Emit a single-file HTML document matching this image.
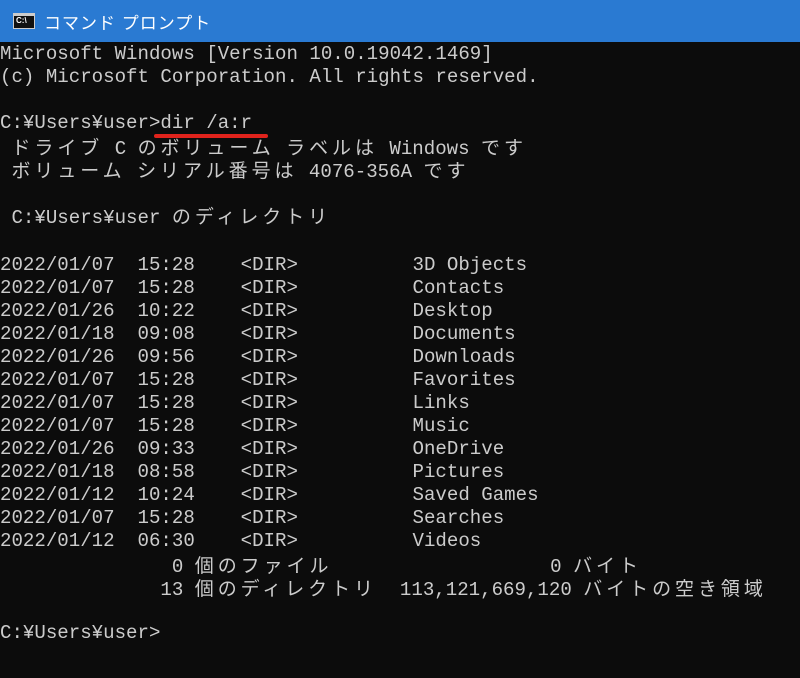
<!DOCTYPE html>
<html><head><meta charset="utf-8"><style>
body{margin:0;width:800px;height:678px;background:#0c0c0c;overflow:hidden;position:relative;font-family:"Liberation Mono","Noto Sans CJK JP",monospace;}
#t{position:absolute;left:0;top:0;width:800px;height:42px;background:#2a7ad2;}
#t .ic{position:absolute;left:13px;top:13px;width:22px;height:16px;background:#111;border:1px solid #ccc;border-top:3px solid #ccc;box-sizing:border-box;color:#fff;font:bold 8px "Liberation Sans",sans-serif;line-height:10px;padding-left:2px}
#t .tt{position:absolute;left:44px;top:9px;color:#fff;font:17px "Liberation Sans","Noto Sans CJK JP",sans-serif;letter-spacing:1px}
.l{position:absolute;left:0;white-space:pre;color:#cccccc;font-size:19.1px;line-height:23px;height:23px}
.j{font-family:"Noto Sans CJK JP",sans-serif;font-size:19px;letter-spacing:3.94px}
#u{position:absolute;left:154px;top:134px;width:114px;height:4px;background:#e0231c;border-radius:2px}
#c{position:absolute;top:2px;left:0}
</style></head><body>
<div id="t"><div class="ic">C:\</div><div class="tt">コマンド プロンプト</div></div>
<div id="c">
<div class="l" style="top:41px">Microsoft Windows [Version 10.0.19042.1469]</div>
<div class="l" style="top:64px">(c) Microsoft Corporation. All rights reserved.</div>
<div class="l" style="top:110px">C:¥Users¥user&gt;dir /a:r</div>
<div class="l" style="top:133px"> <span class="j">ドライブ</span> C <span class="j">のボリューム</span> <span class="j">ラベルは</span> Windows <span class="j">です</span></div>
<div class="l" style="top:156px"> <span class="j">ボリューム</span> <span class="j">シリアル番号は</span> 4076-356A <span class="j">です</span></div>
<div class="l" style="top:202px"> C:¥Users¥user <span class="j">のディレクトリ</span></div>
<div class="l" style="top:252px">2022/01/07  15:28    &lt;DIR&gt;          3D Objects</div>
<div class="l" style="top:275px">2022/01/07  15:28    &lt;DIR&gt;          Contacts</div>
<div class="l" style="top:298px">2022/01/26  10:22    &lt;DIR&gt;          Desktop</div>
<div class="l" style="top:321px">2022/01/18  09:08    &lt;DIR&gt;          Documents</div>
<div class="l" style="top:344px">2022/01/26  09:56    &lt;DIR&gt;          Downloads</div>
<div class="l" style="top:367px">2022/01/07  15:28    &lt;DIR&gt;          Favorites</div>
<div class="l" style="top:390px">2022/01/07  15:28    &lt;DIR&gt;          Links</div>
<div class="l" style="top:413px">2022/01/07  15:28    &lt;DIR&gt;          Music</div>
<div class="l" style="top:436px">2022/01/26  09:33    &lt;DIR&gt;          OneDrive</div>
<div class="l" style="top:459px">2022/01/18  08:58    &lt;DIR&gt;          Pictures</div>
<div class="l" style="top:482px">2022/01/12  10:24    &lt;DIR&gt;          Saved Games</div>
<div class="l" style="top:505px">2022/01/07  15:28    &lt;DIR&gt;          Searches</div>
<div class="l" style="top:528px">2022/01/12  06:30    &lt;DIR&gt;          Videos</div>
<div class="l" style="top:551px">               0 <span class="j">個のファイル</span>                   0 <span class="j">バイト</span></div>
<div class="l" style="top:574px">              13 <span class="j">個のディレクトリ</span>  113,121,669,120 <span class="j">バイトの空き領域</span></div>
<div class="l" style="top:620px">C:¥Users¥user&gt;</div>
</div>
<div id="u"></div>
</body></html>
